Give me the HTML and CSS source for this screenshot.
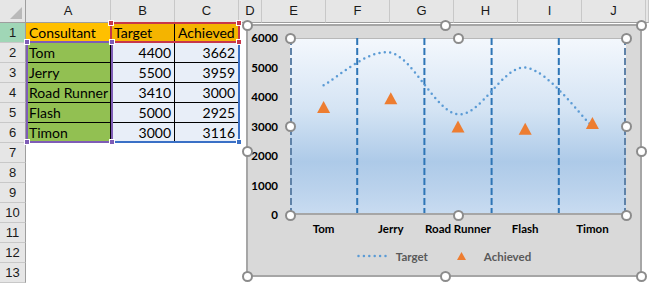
FILE: index.html
```html
<!DOCTYPE html>
<html lang="en">
<head>
    <meta charset="UTF-8">
    <meta name="viewport" content="width=device-width, initial-scale=1.0">
    <title>Target vs Achieved</title>
    <link rel="stylesheet" href="styles.css">
</head>
<body>
    <div class="sheet">
        <div class="row head">
            <div class="corner"></div>
            <div>A</div><div>B</div><div>C</div><div>D</div><div>E</div>
            <div>F</div><div>G</div><div>H</div><div>I</div><div>J</div><div></div>
        </div>
        <div class="row">
            <div class="num active">1</div>
            <div class="cell title">Consultant</div>
            <div class="cell series">Target</div>
            <div class="cell series">Achieved</div>
        </div>
        <div class="row">
            <div class="num">2</div>
            <div class="cell name">Tom</div>
            <div class="cell val">4400</div>
            <div class="cell val">3662</div>
        </div>
        <div class="row">
            <div class="num">3</div>
            <div class="cell name">Jerry</div>
            <div class="cell val">5500</div>
            <div class="cell val">3959</div>
        </div>
        <div class="row">
            <div class="num">4</div>
            <div class="cell name">Road Runner</div>
            <div class="cell val">3410</div>
            <div class="cell val">3000</div>
        </div>
        <div class="row">
            <div class="num">5</div>
            <div class="cell name">Flash</div>
            <div class="cell val">5000</div>
            <div class="cell val">2925</div>
        </div>
        <div class="row">
            <div class="num">6</div>
            <div class="cell name">Timon</div>
            <div class="cell val">3000</div>
            <div class="cell val">3116</div>
        </div>
        <div class="row"><div class="num">7</div></div>
        <div class="row"><div class="num">8</div></div>
        <div class="row"><div class="num">9</div></div>
        <div class="row"><div class="num">10</div></div>
        <div class="row"><div class="num">11</div></div>
        <div class="row"><div class="num">12</div></div>
        <div class="row"><div class="num">13</div></div>

        <!-- chart source ranges -->
        <div class="range range-values"><i class="knob br"></i></div>
        <div class="range range-series"><i class="knob tl"></i><i class="knob tr"></i><i class="knob br"></i></div>
        <div class="range range-names"><i class="knob tl"></i><i class="knob tr"></i><i class="knob bl"></i><i class="knob br"></i></div>

        <div class="chart">
            <div class="chart-body">
                <div class="yaxis">
                    <span>6000</span><span>5000</span><span>4000</span><span>3000</span>
                    <span>2000</span><span>1000</span><span>0</span>
                </div>
                <div class="plot">
                    <svg width="336" height="177" viewBox="0 0 336 177">
                        <defs>
                            <linearGradient id="plotFill" x1="0" y1="0" x2="0" y2="1">
                                <stop offset="0" stop-color="#f4f8fd"/>
                                <stop offset="0.4" stop-color="#d5e4f4"/>
                                <stop offset="0.7" stop-color="#adcae8"/>
                                <stop offset="0.85" stop-color="#bad2ec"/>
                                <stop offset="1" stop-color="#c9dcf1"/>
                            </linearGradient>
                        </defs>
                        <rect width="336" height="177" fill="url(#plotFill)"/>
                        <line x1="0" y1="0.5" x2="336" y2="0.5" stroke="#b8b8b8"/>
                        <line class="edge" x1="1" y1="0" x2="1" y2="177"/>
                        <line class="edge" x1="335" y1="0" x2="335" y2="177"/>
                        <line class="divider" x1="67.2" y1="0" x2="67.2" y2="177"/>
                        <line class="divider" x1="134.4" y1="0" x2="134.4" y2="177"/>
                        <line class="divider" x1="201.6" y1="0" x2="201.6" y2="177"/>
                        <line class="divider" x1="268.8" y1="0" x2="268.8" y2="177"/>
                        <line x1="0" y1="176" x2="336" y2="176" stroke="#a6a6a6" stroke-width="2"/>
                        <path class="target" d="M33.6 47.2 C44.8 41.8 78.4 9.9 100.8 14.75 C123.2 19.6 145.6 73.9 168 76.4 C190.4 78.9 212.8 27.5 235.2 29.5 C257.6 31.5 291.2 78.7 302.4 88.5"/>
                        <g class="achieved">
                            <polygon points="27.1,75 40.1,75 33.6,63"/>
                            <polygon points="94.3,66.2 107.3,66.2 100.8,54.2"/>
                            <polygon points="161.5,94.5 174.5,94.5 168,82.5"/>
                            <polygon points="228.7,96.7 241.7,96.7 235.2,84.7"/>
                            <polygon points="295.9,91.1 308.9,91.1 302.4,79.1"/>
                        </g>
                    </svg>
                    <i class="handle" style="left:0;top:0"></i>
                    <i class="handle" style="left:168px;top:0"></i>
                    <i class="handle" style="left:336px;top:0"></i>
                    <i class="handle" style="left:0;top:88.5px"></i>
                    <i class="handle" style="left:336px;top:88.5px"></i>
                    <i class="handle" style="left:0;top:177px"></i>
                    <i class="handle" style="left:168px;top:177px"></i>
                    <i class="handle" style="left:336px;top:177px"></i>
                </div>
                <div class="xaxis">
                    <span>Tom</span><span>Jerry</span><span>Road Runner</span><span>Flash</span><span>Timon</span>
                </div>
            </div>
            <div class="legend">
                <svg width="33" height="4" viewBox="0 0 33 4"><line class="target" x1="1.5" y1="2" x2="32" y2="2"/></svg>
                <span class="legend-label">Target</span>
                <svg class="legend-marker" width="9" height="8" viewBox="0 0 9 8"><polygon points="0,8 9,8 4.5,0" fill="#ed7d31"/></svg>
                <span class="legend-label">Achieved</span>
            </div>
            <i class="handle" style="left:-1px;top:-1px"></i>
            <i class="handle" style="left:197px;top:-1px"></i>
            <i class="handle" style="left:393px;top:-1px"></i>
            <i class="handle" style="left:-1px;top:125px"></i>
            <i class="handle" style="left:393px;top:125px"></i>
            <i class="handle" style="left:-1px;top:250px"></i>
            <i class="handle" style="left:197px;top:250px"></i>
            <i class="handle" style="left:393px;top:250px"></i>
        </div>
    </div>
</body>
</html>
```

FILE: styles.css
```css
* {
    box-sizing: border-box;
}
body {
    margin: 0;
    background: #fff;
    font-family: Lato, "Liberation Sans", sans-serif;
    color: #000;
}
.sheet {
    position: relative;
    width: 649px;
    height: 283px;
    overflow: hidden;
}
.row {
    display: grid;
    grid-template-columns: 26px 85px 64px 64px 23px repeat(6, 64px) 1fr;
    height: 20px;
}
.row.head {
    height: 23px;
    background: #e6e6e6;
}
.head > div {
    border-right: 1px solid #c8c8c8;
    border-bottom: 1px solid #9e9e9e;
    font: 13px "Liberation Sans", sans-serif;
    line-height: 22px;
    text-align: center;
    color: #1a1a1a;
}
.head > .corner {
    position: relative;
    border-right-color: #9e9e9e;
}
.corner::after {
    content: "";
    position: absolute;
    right: 3px;
    bottom: 3px;
    border-left: 12px solid transparent;
    border-bottom: 12px solid #b9b9b9;
}
.num {
    background: #e6e6e6;
    border-right: 1px solid #9e9e9e;
    border-bottom: 1px solid #c8c8c8;
    font: 13px "Liberation Sans", sans-serif;
    line-height: 19px;
    text-align: center;
    color: #1a1a1a;
}
.num.active {
    background: #a0d6b6;
}
.cell {
    border-right: 1px solid #000;
    border-bottom: 1px solid #000;
    padding: 0 3px;
    font-size: 14px;
    line-height: 19px;
    white-space: nowrap;
    overflow: hidden;
}
.title {
    background: #ffc000;
}
.series {
    background: #f4b400;
}
.name {
    background: #92c052;
}
.val {
    background: #e8eef8;
    text-align: right;
}

/* chart data range outlines */
.range {
    position: absolute;
    border: 2px solid;
}
.range-names {
    left: 26px;
    top: 41px;
    width: 87px;
    height: 102px;
    border-color: #7e5cb6;
    color: #7e5cb6;
}
.range-series {
    left: 110px;
    top: 22px;
    width: 130px;
    height: 21px;
    border-color: #c8374a;
    color: #c8374a;
}
.range-values {
    left: 111px;
    top: 41px;
    width: 129px;
    height: 102px;
    border-color: #3a70c6;
    color: #3a70c6;
}
.knob {
    position: absolute;
    width: 6px;
    height: 6px;
    background: currentColor;
    border: 1px solid #fff;
}
.knob.tl { left: -4px; top: -4px; }
.knob.tr { right: -4px; top: -4px; }
.knob.bl { left: -4px; bottom: -4px; }
.knob.br { right: -4px; bottom: -4px; }

/* chart */
.chart {
    position: absolute;
    left: 246px;
    top: 24px;
    width: 396px;
    height: 253px;
    border: 2px solid #a6a6a6;
    background: #d9d9d9;
    padding-top: 12px;
    font-size: 11.5px;
    font-weight: bold;
}
.chart-body {
    display: grid;
    grid-template-columns: 42px 336px;
}
.yaxis {
    display: flex;
    flex-direction: column;
    justify-content: space-between;
    height: 177px;
    padding-right: 12px;
    text-align: right;
    line-height: 14px;
}
.yaxis span:first-child {
    margin-top: -7px;
}
.yaxis span:last-child {
    margin-bottom: -7px;
}
.plot {
    position: relative;
    height: 177px;
}
.plot svg {
    display: block;
}
.divider {
    stroke: #2e75b6;
    stroke-width: 2;
    stroke-dasharray: 7 3;
}
.edge {
    stroke: #5f82a8;
    stroke-width: 2;
    stroke-dasharray: 7 3;
}
.target {
    fill: none;
    stroke: #5b9bd5;
    stroke-width: 2.5;
    stroke-linecap: round;
    stroke-dasharray: 0 5.4;
}
.achieved polygon {
    fill: #ed7d31;
}
.xaxis {
    grid-column: 2;
    display: grid;
    grid-template-columns: repeat(5, 1fr);
    margin-top: 7px;
    line-height: 14px;
    text-align: center;
    white-space: nowrap;
}
.legend {
    display: flex;
    justify-content: center;
    align-items: center;
    margin-top: 13px;
    height: 14px;
    color: #595959;
}
.legend-label {
    margin-left: 6px;
}
.legend-marker {
    margin-left: 29px;
    margin-right: 12px;
}
.handle {
    position: absolute;
    width: 11px;
    height: 11px;
    margin: -5.5px 0 0 -5.5px;
    border: 2px solid #8c8c8c;
    border-radius: 50%;
    background: #fff;
}
```
